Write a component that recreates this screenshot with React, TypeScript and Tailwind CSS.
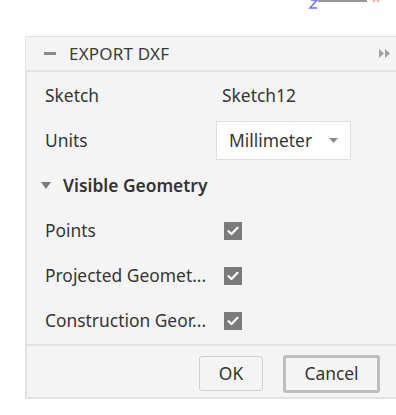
import React from "react";

const font = { fontFamily: '"Noto Sans", "Open Sans", sans-serif' };

function Check() {
  return (
    <div className="w-[18px] h-[18px] bg-[#7a7a7a] flex items-center justify-center">
      <svg width="12" height="10" viewBox="0 0 12 10">
        <path d="M1.5 5.2 L4.5 8 L10.5 1.8" stroke="#fff" strokeWidth="2.2" fill="none" strokeLinecap="round" strokeLinejoin="round" />
      </svg>
    </div>
  );
}

function Row({ label, children }: { label: string; children?: React.ReactNode }) {
  return (
    <div className="h-[45px] flex items-center pl-[18px]">
      <div className="w-[179px] text-[17.4px] text-[#353535] whitespace-nowrap">{label}</div>
      {children}
    </div>
  );
}

export default function App() {
  return (
    <div className="w-[396px] h-[415px] bg-white overflow-hidden relative" style={font}>
      <svg className="absolute left-[305px] top-0" width="80" height="10" viewBox="0 0 80 10">
        <path d="M6 0 L12 0 L5 8 L12 8" stroke="#6a6aff" strokeWidth="1.5" fill="none" />
        <path d="M13 1 L62 1" stroke="#777" strokeWidth="1.5" />
        <path d="M48 0 L48 2 M56 0 L56 2" stroke="#999" strokeWidth="1" />
        <circle cx="69" cy="1" r="1" fill="#f88" />
        <circle cx="73" cy="1" r="1" fill="#f88" />
      </svg>
      <div className="ml-[25px] mt-[36px] w-[390px] bg-[#f4f4f4] border-t border-[#e2e2e2] border-b-2 border-l-2">
        <div className="h-[35px] flex items-center border-b-2 border-[#e2e2e2] bg-[#f4f4f4] -ml-[2px] border-l border-l-[#e6e6e6]">
          <div className="w-[12px] h-[3px] bg-[#8a8a8a] ml-[18px] mr-[13px]"></div>
          <div className="text-[17px] text-[#3a3a3a] tracking-[0.2px]">EXPORT DXF</div>
          <div className="ml-auto mr-[24px]">
            <svg width="12" height="9" viewBox="0 0 12 9">
              <path d="M0 0 L5 4.5 L0 9 Z M6 0 L11 4.5 L6 9 Z" fill="#a0a0a0" />
            </svg>
          </div>
        </div>
        <div className="pt-[1px]">
          <Row label="Sketch">
            <div className="text-[17.4px] text-[#353535] -ml-[2px]">Sketch12</div>
          </Row>
          <Row label="Units">
            <div className="-ml-[8px] w-[135px] h-[39px] bg-white border border-[#dedede] flex items-center pl-[12px] pr-[12px]">
              <span className="text-[17.4px] text-[#353535]">Millimeter</span>
              <svg className="ml-auto" width="9" height="5" viewBox="0 0 9 5">
                <path d="M0 0 L9 0 L4.5 5 Z" fill="#8a8a8a" />
              </svg>
            </div>
          </Row>
          <div className="h-[45px] flex items-center pl-[14px]">
            <svg width="10" height="7" viewBox="0 0 10 7" className="mr-[12px]">
              <path d="M0 0 L10 0 L5 7 Z" fill="#7a7a7a" />
            </svg>
            <span className="text-[17.4px] font-semibold text-[#333]">Visible Geometry</span>
          </div>
          <Row label="Points"><Check /></Row>
          <Row label="Projected Geomet..."><Check /></Row>
          <Row label="Construction Geor..."><Check /></Row>
          <div className="h-[1px]"></div>
        </div>
        <div className="border-t-2 border-[#e2e2e2] h-[53px] flex items-center pt-[4px] pl-[172px] gap-[20px]">
          <button className="w-[64px] h-[35px] border border-[#cfcfcf] rounded-[3px] bg-[#f4f4f4] text-[17.4px] text-[#353535]">OK</button>
          <button className="w-[97px] h-[38px] border-[3px] border-[#bdbdbd] rounded-[3px] bg-[#f4f4f4] text-[17.4px] text-[#353535]">Cancel</button>
        </div>
      </div>
    </div>
  );
}
